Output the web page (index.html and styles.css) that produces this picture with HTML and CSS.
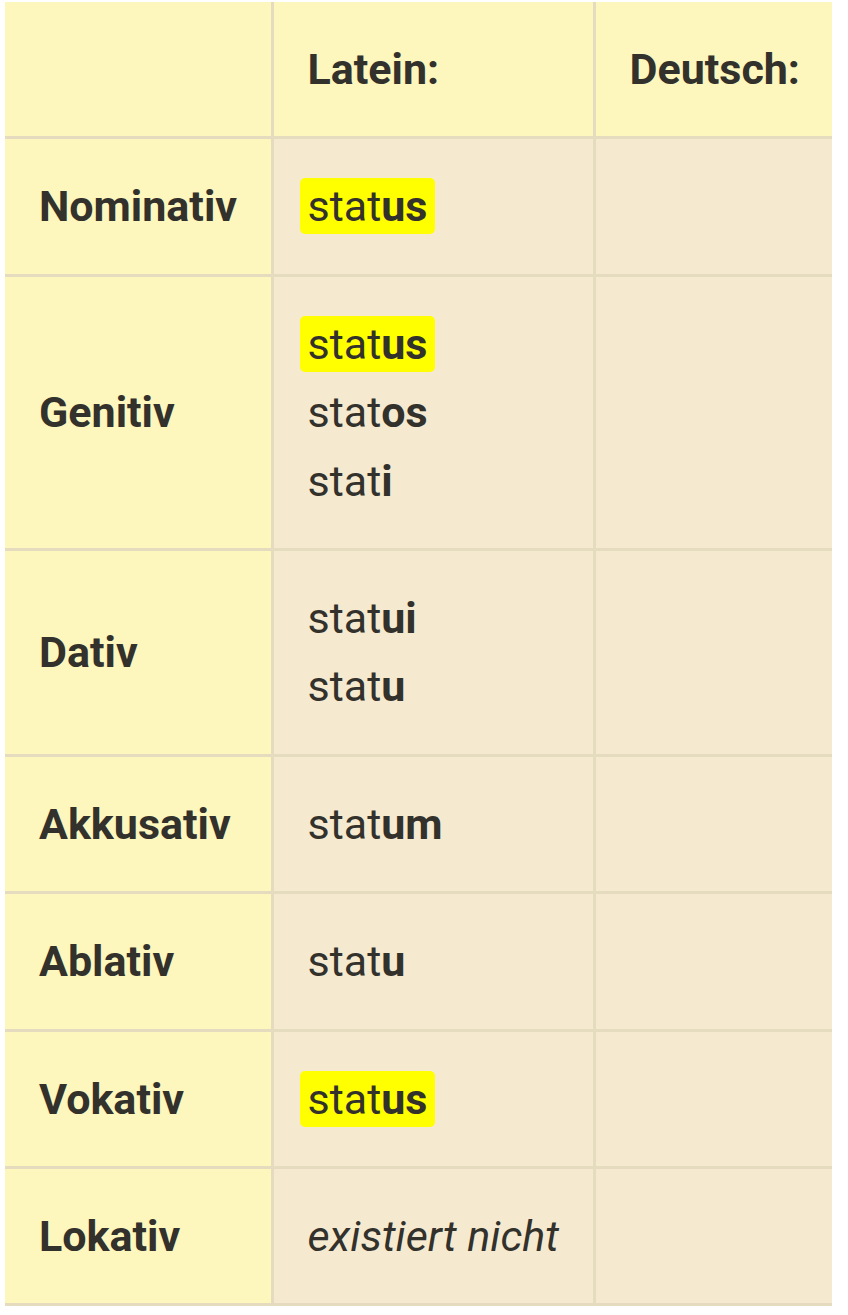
FILE: index.html
```html
<!DOCTYPE html>
<html lang="de">
<head>
<meta charset="utf-8">
<title>status – Deklination</title>
<link rel="stylesheet" href="styles.css">
</head>
<body>
<table class="decl">
  <colgroup>
    <col class="c1"><col class="c2"><col class="c3">
  </colgroup>
  <thead>
    <tr><th class="head"></th><th class="head">Latein:</th><th class="head last">Deutsch:</th></tr>
  </thead>
  <tbody>
    <tr><th class="case">Nominativ</th><td><span class="hl">stat<b>us</b></span></td><td class="last"></td></tr>
    <tr><th class="case">Genitiv</th><td><span class="hl">stat<b>us</b></span><br>stat<b>os</b><br>stat<b>i</b></td><td class="last"></td></tr>
    <tr><th class="case">Dativ</th><td>stat<b>ui</b><br>stat<b>u</b></td><td class="last"></td></tr>
    <tr><th class="case">Akkusativ</th><td>stat<b>um</b></td><td class="last"></td></tr>
    <tr><th class="case">Ablativ</th><td>stat<b>u</b></td><td class="last"></td></tr>
    <tr><th class="case">Vokativ</th><td><span class="hl">stat<b>us</b></span></td><td class="last"></td></tr>
    <tr><th class="case">Lokativ</th><td><i>existiert nicht</i></td><td class="last"></td></tr>
  </tbody>
</table>
</body>
</html>
```

FILE: styles.css
```css
html, body {
  margin: 0;
  padding: 0;
  background: #ffffff;
}
body {
  padding: 2px 0 0 5px;
  font-family: Roboto, "Liberation Sans", sans-serif;
  color: #33312c;
}
.decl {
  border-collapse: collapse;
  width: 827px;
  table-layout: fixed;
  font-size: 43px;
  line-height: 68.4px;
}
.c1 { width: 267px; }
.c2 { width: 322px; }
.c3 { width: 238px; }
.decl th, .decl td {
  padding: 33px 0 33px 34px;
  text-align: left;
  vertical-align: middle;
  border-right: 3px solid #e5dbbe;
  border-bottom: 3px solid #e5dbbe;
}
.decl .last { border-right: none; }
.decl th { font-weight: 700; background: #fdf6bd; }
.decl td { background: #f5ead0; font-weight: 400; }
.decl b { font-weight: 700; }
.decl i { font-style: italic; }
.hl {
  background: #ffff00;
  border-radius: 5px;
  padding: 3px 8px;
  margin-left: -8px;
}
```
